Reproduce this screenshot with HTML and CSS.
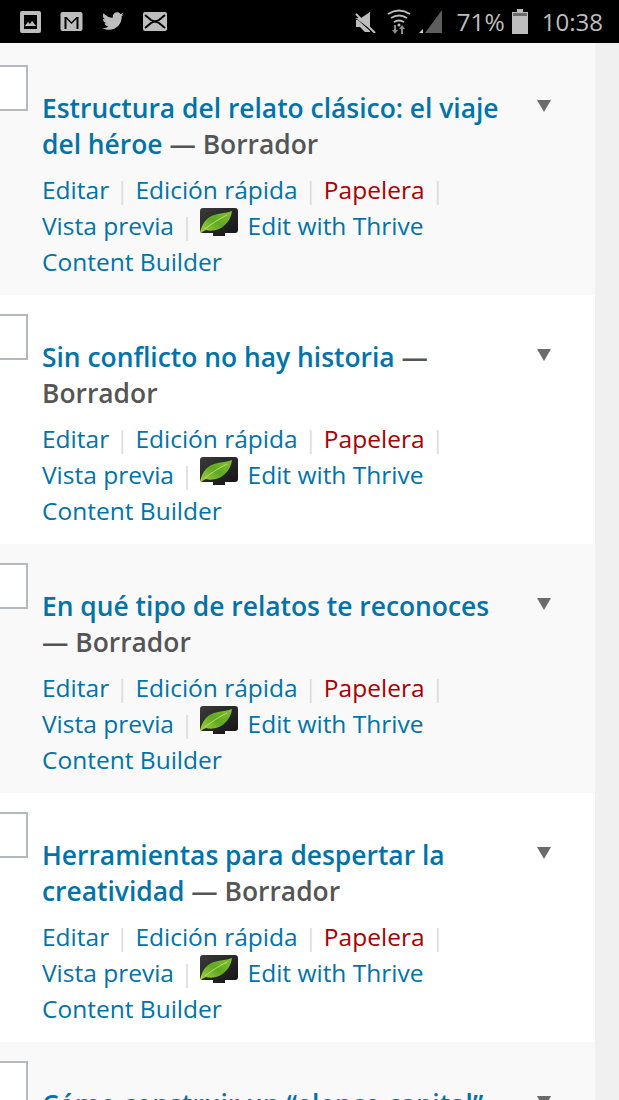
FILE: index.html
```html
<!DOCTYPE html>
<html lang="es">
<head>
    <meta charset="UTF-8">
    <meta name="viewport" content="width=device-width, initial-scale=1.0">
    <title>Entradas</title>
    <link rel="stylesheet" href="styles.css">
</head>
<body>
    <svg class="defs" width="0" height="0">
        <defs>
            <linearGradient id="leaf-fill" x1="0" y1="1" x2="1" y2="0">
                <stop offset="0" stop-color="#a5d63f"/>
                <stop offset="0.5" stop-color="#5fa821"/>
                <stop offset="1" stop-color="#86c232"/>
            </linearGradient>
            <linearGradient id="screen-fill" x1="0" y1="0" x2="1" y2="1">
                <stop offset="0" stop-color="#3a3a3a"/>
                <stop offset="1" stop-color="#141414"/>
            </linearGradient>
            <symbol id="thrive" viewBox="0 0 38 30">
                <path d="M3 0h32a3 3 0 0 1 3 3v19a3 3 0 0 1-3 3H25v3h-12v-3H3a3 3 0 0 1-3-3V3a3 3 0 0 1 3-3z" fill="url(#screen-fill)"/>
                <path d="M0 25C2 15 7 9 14 7c7-2 13-2 18-4-1 8-6 15-13 18-5 2-10 2-13 1-2 1-4 2-6 3z" fill="url(#leaf-fill)"/>
                <path d="M5 21C11 16 19 11 27 7" fill="none" stroke="#cfe58e" stroke-width="0.8"/>
            </symbol>
        </defs>
    </svg>

    <div class="status-bar">
        <div class="status-left">
            <svg width="21" height="22" viewBox="0 0 21 22"><path fill-rule="evenodd" fill="#bdbdbd" d="M2 0h17a2 2 0 0 1 2 2v18a2 2 0 0 1-2 2H2a2 2 0 0 1-2-2V2a2 2 0 0 1 2-2zm2 4v14h13V4z"/><path fill="#bdbdbd" d="M5 15l3-4 2 2 2-3 4 5z"/></svg>
            <svg width="23" height="19" viewBox="0 0 22 19"><path fill-rule="evenodd" fill="#bdbdbd" d="M2 0h18a2 2 0 0 1 2 2v15a2 2 0 0 1-2 2H2a2 2 0 0 1-2-2V2a2 2 0 0 1 2-2zm2 5v12h2V7l5 5 5-5v10h2V5h-2l-5 5-5-5z"/></svg>
            <svg width="22" height="19" viewBox="0 0 24 20"><path fill="#bdbdbd" d="M24 2.400c-.9.4-1.800.7-2.800.8 1-.6 1.800-1.600 2.200-2.700-1 .6-2 1-3.100 1.200C19.300.6 18 0 16.600 0c-2.700 0-4.900 2.200-4.900 4.900 0 .4 0 .8.100 1.100C7.700 5.800 4.100 3.900 1.700.9c-.4.700-.7 1.600-.7 2.500 0 1.700.9 3.200 2.200 4.100-.8 0-1.600-.2-2.200-.6v.1c0 2.400 1.700 4.400 3.900 4.800-.4.100-.8.200-1.300.2-.3 0-.6 0-.9-.1.600 2 2.400 3.400 4.600 3.400-1.700 1.300-3.800 2.100-6.100 2.100-.4 0-.8 0-1.200-.1C2.200 18.200 4.800 19 7.500 19c9.100 0 14-7.500 14-14v-.6c1-.7 1.800-1.600 2.500-2z"/></svg>
            <svg width="24" height="19" viewBox="0 0 24 19"><path fill-rule="evenodd" fill="#bdbdbd" d="M2 0h20a2 2 0 0 1 2 2v15a2 2 0 0 1-2 2H2a2 2 0 0 1-2-2V2a2 2 0 0 1 2-2z"/><path fill="none" stroke="#000" stroke-width="2" d="M2 3l6 5q4 2.500 8 0l6-5M2 16l6-5q4-2.500 8 0l6 5"/></svg>
        </div>
        <div class="status-right">
            <svg class="ic-mute" width="22" height="22" viewBox="0 0 22 22"><path fill="#bdbdbd" d="M0 7h6l9-6v17L2 8z"/><path fill="#bdbdbd" d="M1 9h2l12 11v1H10l-5-5H1z"/><path stroke="#bdbdbd" stroke-width="2" d="M1 3l19 19"/></svg>
            <svg class="ic-wifi" width="24" height="25" viewBox="0 0 24 25"><g fill="none" stroke="#bdbdbd" stroke-width="2"><path d="M1 5q11-7 22 0"/><path d="M4 9q8-5 16 0"/><path d="M7 13q5-3 10 0"/></g><circle cx="12" cy="16" r="1.500" fill="#bdbdbd"/><path fill="#8a8a8a" d="M7 16h2v5h2l-3 4-3-4h2z"/><path fill="#8a8a8a" d="M16 25h-2v-5h-2l3-4 3 4h-2z"/></svg>
            <svg class="ic-signal" width="23" height="23" viewBox="0 0 23 23"><path fill="#5e5e5e" d="M23 0v23H6z"/><path fill="#cfcfcf" d="M0 23l4-4v4z"/></svg>
            <span class="battery-pct">71%</span>
            <svg class="ic-battery" width="16" height="25" viewBox="0 0 16 25"><path fill="#bdbdbd" d="M0 3h5V0h6v3h5v22H0z"/><path fill="#6a6a6a" d="M1 4h14v3H1z"/></svg>
            <span class="clock">10:38</span>
        </div>
    </div>

    <div class="post-list">
        <div class="post-row odd first">
            <span class="check"></span>
            <div class="post-body">
                <div class="post-title"><a href="#">Estructura del relato clásico: el viaje del héroe</a> <span class="state">— Borrador</span></div>
                <div class="row-actions">
                    <span><a href="#">Editar</a> <i>|</i></span> <span><a href="#">Edición rápida</a> <i>|</i></span> <span><a class="trash" href="#">Papelera</a> <i>|</i></span> <span><a href="#">Vista previa</a> <i>|</i></span> <svg class="thrive"><use href="#thrive"/></svg> <a href="#">Edit with Thrive Content Builder</a>
                </div>
            </div>
            <span class="toggle"></span>
        </div>
        <div class="post-row">
            <span class="check"></span>
            <div class="post-body">
                <div class="post-title"><a href="#">Sin conflicto no hay historia</a> <span class="state">— Borrador</span></div>
                <div class="row-actions">
                    <span><a href="#">Editar</a> <i>|</i></span> <span><a href="#">Edición rápida</a> <i>|</i></span> <span><a class="trash" href="#">Papelera</a> <i>|</i></span> <span><a href="#">Vista previa</a> <i>|</i></span> <svg class="thrive"><use href="#thrive"/></svg> <a href="#">Edit with Thrive Content Builder</a>
                </div>
            </div>
            <span class="toggle"></span>
        </div>
        <div class="post-row odd">
            <span class="check"></span>
            <div class="post-body">
                <div class="post-title"><a href="#">En qué tipo de relatos te reconoces</a> <span class="state">— Borrador</span></div>
                <div class="row-actions">
                    <span><a href="#">Editar</a> <i>|</i></span> <span><a href="#">Edición rápida</a> <i>|</i></span> <span><a class="trash" href="#">Papelera</a> <i>|</i></span> <span><a href="#">Vista previa</a> <i>|</i></span> <svg class="thrive"><use href="#thrive"/></svg> <a href="#">Edit with Thrive Content Builder</a>
                </div>
            </div>
            <span class="toggle"></span>
        </div>
        <div class="post-row">
            <span class="check"></span>
            <div class="post-body">
                <div class="post-title"><a href="#">Herramientas para despertar la creatividad</a> <span class="state">— Borrador</span></div>
                <div class="row-actions">
                    <span><a href="#">Editar</a> <i>|</i></span> <span><a href="#">Edición rápida</a> <i>|</i></span> <span><a class="trash" href="#">Papelera</a> <i>|</i></span> <span><a href="#">Vista previa</a> <i>|</i></span> <svg class="thrive"><use href="#thrive"/></svg> <a href="#">Edit with Thrive Content Builder</a>
                </div>
            </div>
            <span class="toggle"></span>
        </div>
        <div class="post-row odd">
            <span class="check"></span>
            <div class="post-body">
                <div class="post-title"><a href="#">Cómo construir un “elenco capital”</a></div>
            </div>
            <span class="toggle"></span>
        </div>
    </div>
</body>
</html>
```

FILE: styles.css
```css
* {
    box-sizing: border-box;
    margin: 0;
    padding: 0;
}

html, body {
    height: 1100px;
    overflow: hidden;
}

body {
    font-family: "Open Sans", "Noto Sans", sans-serif;
    background: #f0f0f0;
    color: #555;
}

a {
    color: #0073aa;
    text-decoration: none;
}

.defs {
    display: block;
    height: 0;
}

.status-bar {
    height: 43px;
    background: #000;
    display: flex;
    justify-content: space-between;
    align-items: center;
    padding: 0 16px 0 20px;
    color: #bdbdbd;
}

.status-left {
    display: flex;
    align-items: center;
    gap: 19px;
}

.status-right {
    display: flex;
    align-items: center;
}

.ic-mute {
    margin-right: 10px;
}

.ic-signal {
    margin: 0 15px 0 8px;
}

.battery-pct, .clock {
    line-height: 43px;
}

.battery-pct {
    font-size: 24.5px;
}

.clock {
    font-size: 24px;
}

.ic-battery {
    margin: 0 14px 0 7px;
}

.post-list {
    width: 595px;
}

.post-row {
    display: flex;
    height: 249px;
    padding-top: 19px;
    background: #fff;
}

.post-row.odd {
    background: #f9f9f9;
}

.post-row.first {
    height: 252px;
    padding-top: 22px;
}

.check {
    flex: none;
    width: 28px;
    height: 46px;
    background: #fff;
    border: 2px solid #b4b9be;
    border-left: none;
}

.post-body {
    width: 465px;
    margin-left: 14px;
    padding-top: 25px;
}

.post-title {
    font-size: 26.4px;
    line-height: 36px;
    font-weight: 600;
    color: #555;
}

.row-actions {
    margin-top: 10px;
    font-size: 24.5px;
    line-height: 36px;
}

.row-actions span {
    white-space: nowrap;
}

.row-actions i {
    font-style: normal;
    color: #ddd;
}

.trash {
    color: #a00;
}

.thrive {
    width: 38px;
    height: 30px;
    margin-right: 3px;
    vertical-align: -3px;
}

.toggle {
    flex: none;
    width: 0;
    height: 0;
    margin: 35px 0 0 30px;
    border-left: 7.5px solid transparent;
    border-right: 7.5px solid transparent;
    border-top: 12px solid #6b6b6b;
}
```
